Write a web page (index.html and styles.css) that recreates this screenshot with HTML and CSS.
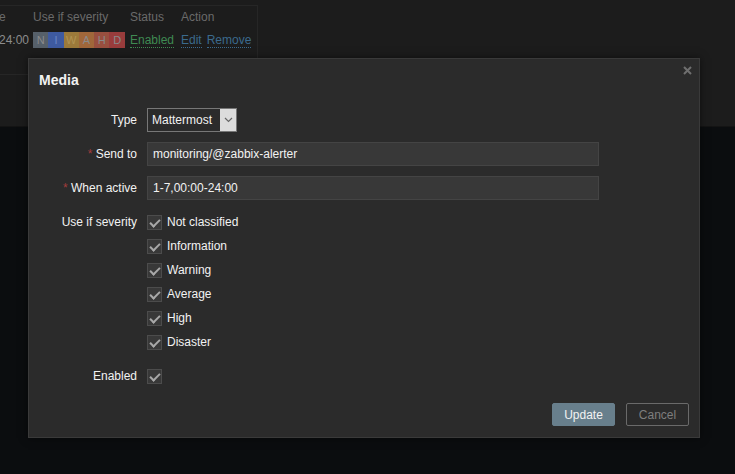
FILE: index.html
```html
<!DOCTYPE html>
<html lang="en">
<head>
  <meta charset="UTF-8">
  <title>Media</title>
  <link rel="stylesheet" href="styles.css">
</head>
<body>
  <!-- page behind the dialog -->
  <div class="page">
    <div class="media-table">
      <div class="tr head">
        <span class="c-period">e</span>
        <span class="c-sev">Use if severity</span>
        <span class="c-status">Status</span>
        <span class="c-action">Action</span>
      </div>
      <div class="tr">
        <span class="c-period">24:00</span>
        <span class="c-sev sev-list">
          <span class="sev n">N</span><span class="sev i">I</span><span class="sev w">W</span><span class="sev a">A</span><span class="sev h">H</span><span class="sev d">D</span>
        </span>
        <span class="c-status"><span class="link green">Enabled</span></span>
        <span class="c-action"><span class="link">Edit</span><span class="link gap">Remove</span></span>
      </div>
    </div>
  </div>

  <!-- Media dialog -->
  <div class="overlay-dialog">
    <div class="dialog-head">
      <h4>Media</h4>
      <span class="close">
        <svg width="9" height="9" viewBox="0 0 9 9"><path d="M1 1l7 7M8 1l-7 7" stroke="#6f6f6f" stroke-width="2"/></svg>
      </span>
    </div>
    <div class="form-list">
      <div class="form-row">
        <label>Type</label>
        <div class="field">
          <div class="select">
            <span class="select-text">Mattermost</span>
            <span class="select-arrow">
              <svg width="9" height="6" viewBox="0 0 9 6"><path d="M1 1l3.5 3.5L8 1" fill="none" stroke="#666" stroke-width="1.2"/></svg>
            </span>
          </div>
        </div>
      </div>
      <div class="form-row">
        <label><span class="req">*</span> Send to</label>
        <div class="field"><input class="text" type="text" value="monitoring/@zabbix-alerter"></div>
      </div>
      <div class="form-row">
        <label><span class="req">*</span> When active</label>
        <div class="field"><input class="text" type="text" value="1-7,00:00-24:00"></div>
      </div>
      <div class="form-row">
        <label class="top">Use if severity</label>
        <ul class="check-list">
          <li><span class="cb"></span>Not classified</li>
          <li><span class="cb"></span>Information</li>
          <li><span class="cb"></span>Warning</li>
          <li><span class="cb"></span>Average</li>
          <li><span class="cb"></span>High</li>
          <li><span class="cb"></span>Disaster</li>
        </ul>
      </div>
      <div class="form-row">
        <label>Enabled</label>
        <div class="field"><span class="cb"></span></div>
      </div>
    </div>
    <div class="dialog-foot">
      <button class="btn primary">Update</button>
      <button class="btn alt">Cancel</button>
    </div>
  </div>
</body>
</html>
```

FILE: styles.css
```css
body {
  margin: 0;
  background: #0b0d0f;
  font-family: "Liberation Sans", Arial, sans-serif;
  font-size: 12px;
  color: #f2f2f2;
  width: 735px;
  height: 474px;
  overflow: hidden;
  position: relative;
}
.page {
  height: 127px;
  background: #1c1c1c;
  border-bottom: 1px solid #141414;
  box-sizing: border-box;
  padding-top: 5px;
}
.media-table {
  width: 259px;
  height: 70px;
  border-top: 1px solid #262626;
  border-right: 1px solid #262626;
  border-bottom: 1px solid #262626;
  box-sizing: border-box;
  margin-left: -1px;
}
.tr {
  display: flex;
  align-items: center;
  height: 23px;
  color: #6a6a6a;
}
.tr.head {
  height: 22px;
}
.tr:not(.head) {
  color: #8c8c8c;
}
.c-period { width: 34px; }
.c-sev { width: 97px; }
.c-status { width: 51px; }
.sev-list {
  display: flex;
}
.sev {
  width: 15.3px;
  height: 16px;
  line-height: 16px;
  text-align: center;
  color: #8a8a8a;
  font-size: 11px;
}
.sev.n { background: #56606a; }
.sev.i { background: #3e5aa0; color: #6b84c4; }
.sev.w { background: #9c7a3a; color: #b19453; }
.sev.a { background: #a0673a; }
.sev.h { background: #984f3f; }
.sev.d { background: #993c3c; }
.link {
  color: #3b6a8d;
  border-bottom: 1px dotted #3b6a8d;
}
.link.gap {
  margin-left: 5px;
}
.link.green {
  color: #3f8a52;
  border-bottom-color: #3f8a52;
}

/* dialog */
.overlay-dialog {
  position: absolute;
  left: 28px;
  top: 58px;
  width: 672px;
  height: 380px;
  box-sizing: border-box;
  display: flex;
  flex-direction: column;
  background: #2b2b2b;
  border: 1px solid #3a3a3a;
  box-shadow: 0 0 8px rgba(0,0,0,0.5);
}
.dialog-head {
  position: relative;
  height: 40px;
  padding: 0 10px;
}
.dialog-head h4 {
  margin: 0;
  font-size: 14px;
  font-weight: bold;
  line-height: 42px;
  color: #f2f2f2;
}
.close {
  position: absolute;
  right: 7px;
  top: 7px;
  display: flex;
}
.form-list {
  margin-top: 9px;
  display: flex;
  flex-direction: column;
  gap: 10px;
}
.form-row {
  display: flex;
  gap: 10px;
  align-items: flex-start;
}
.form-row label {
  width: 108px;
  text-align: right;
  line-height: 24px;
  white-space: nowrap;
}
.req {
  color: #a33c3c;
}
.field {
  display: flex;
  align-items: center;
  height: 24px;
}
.select {
  display: flex;
  width: 90px;
  height: 24px;
  box-sizing: border-box;
  border: 1px solid #777;
  background: #2b2b2b;
}
.select-text {
  flex: 1;
  line-height: 22px;
  padding-left: 4px;
}
.select-arrow {
  width: 16px;
  background: #dcdcdc;
  display: flex;
  align-items: center;
  justify-content: center;
}
.text {
  width: 452px;
  height: 24px;
  box-sizing: border-box;
  background: #383838;
  border: 1px solid #444;
  color: #f2f2f2;
  font-family: inherit;
  font-size: 12px;
  padding: 0 5px;
  outline: none;
}
.check-list {
  list-style: none;
  margin: 0;
  padding: 0;
}
.check-list li {
  display: flex;
  align-items: center;
  height: 24px;
}
.cb {
  width: 15px;
  height: 15px;
  box-sizing: border-box;
  border: 1px solid #4c4c4c;
  background: #383838;
  margin-right: 5px;
  position: relative;
  flex: none;
}
.cb::after {
  content: "";
  position: absolute;
  left: 4px;
  top: 1px;
  width: 4px;
  height: 8px;
  border-right: 2px solid #a8a8a8;
  border-bottom: 2px solid #a8a8a8;
  transform: rotate(45deg);
}
.dialog-foot {
  margin-top: auto;
  padding: 0 10px 11px;
  display: flex;
  justify-content: flex-end;
  gap: 11px;
}
.btn {
  width: 63px;
  height: 23px;
  font-family: inherit;
  font-size: 12px;
  border-radius: 2px;
  padding: 0;
  cursor: pointer;
}
.btn.primary {
  background: #687f8c;
  border: 1px solid #687f8c;
  color: #f2f2f2;
}
.btn.alt {
  background: transparent;
  border: 1px solid #6a6a6a;
  color: #7e7e7e;
}
```
